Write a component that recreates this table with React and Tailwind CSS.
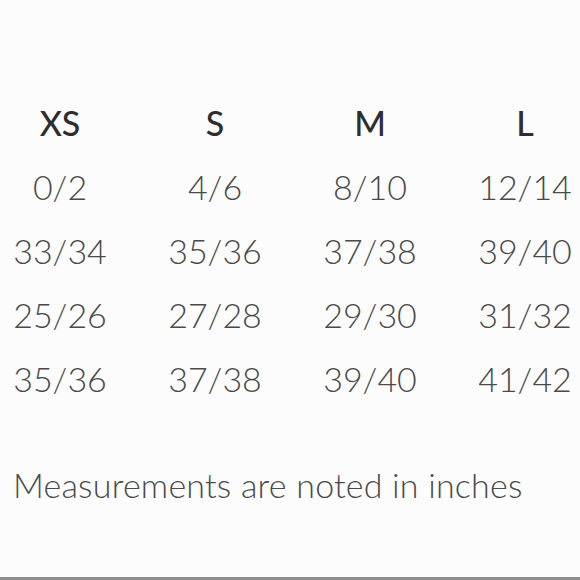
import React from 'react';

const sizes = ['XS', 'S', 'M', 'L'];

const rows = [
  ['0/2', '4/6', '8/10', '12/14'],
  ['33/34', '35/36', '37/38', '39/40'],
  ['25/26', '27/28', '29/30', '31/32'],
  ['35/36', '37/38', '39/40', '41/42'],
];

export default function App() {
  return (
    <div
      className="h-[580px] w-[580px] bg-[#fcfcfc] flex flex-col overflow-hidden"
      style={{ fontFamily: 'Lato, "Open Sans", sans-serif' }}
    >
      <div className="pt-[90px] pl-[5px] grid grid-cols-[repeat(4,110px)] gap-x-[45px]">
        {sizes.map((s) => (
          <div key={s} className="h-[64px] flex items-center justify-center text-[34px] font-medium text-[#2e2e2e]">
            {s}
          </div>
        ))}
        {rows.map((row, i) =>
          row.map((val, j) => (
            <div key={`${i}-${j}`} className="h-[64px] flex items-center justify-center text-[34px] font-light text-[#4a4a4a]">
              {val}
            </div>
          ))
        )}
      </div>

      <p className="mt-[55px] pl-[13px] text-[34px] leading-[40px] tracking-[0.2px] font-light text-[#4a4a4a] whitespace-nowrap">
        Measurements are noted in inches
      </p>

      {/* bottom rule */}
      <div className="mt-auto h-[3px] bg-[#8c8c8c]" />
    </div>
  );
}
